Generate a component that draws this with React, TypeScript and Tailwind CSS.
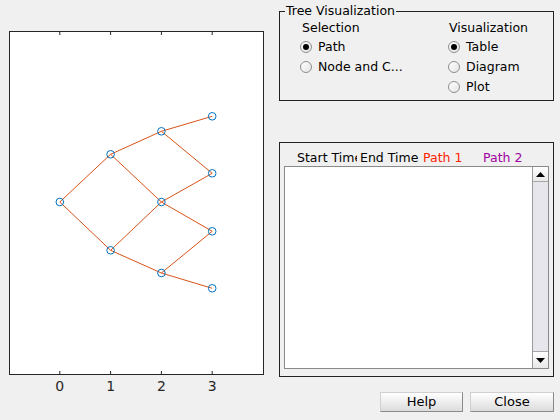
import React from "react";

const X = (d: number) => 9 + (d + 1) * 50.8;

const nodes: Record<string, [number, number]> = {
  a: [X(0), 202],
  b1: [X(1), 154.3],
  b2: [X(1), 250.3],
  c1: [X(2), 131.3],
  c2: [X(2), 202],
  c3: [X(2), 273],
  d1: [X(3), 116.3],
  d2: [X(3), 173.3],
  d3: [X(3), 231.3],
  d4: [X(3), 288.3],
};

const edges: [string, string][] = [
  ["a", "b1"],
  ["a", "b2"],
  ["b1", "c1"],
  ["b1", "c2"],
  ["b2", "c2"],
  ["b2", "c3"],
  ["c1", "d1"],
  ["c1", "d2"],
  ["c2", "d2"],
  ["c2", "d3"],
  ["c3", "d3"],
  ["c3", "d4"],
];

function Plot() {
  return (
    <svg width={275} height={420} className="block">
      <rect x={9.5} y={31.5} width={254} height={343} fill="#ffffff" stroke="#262626" strokeWidth={1} />
      {[0, 1, 2, 3].map((d) => (
        <g key={d}>
          <line x1={X(d)} x2={X(d)} y1={32} y2={35} stroke="#262626" strokeWidth={1} />
          <line x1={X(d)} x2={X(d)} y1={374} y2={371} stroke="#262626" strokeWidth={1} />
          <text
            x={X(d)}
            y={391}
            textAnchor="middle"
            fontSize={14}
            fill="#262626"
            fontFamily="'DejaVu Sans', sans-serif"
          >
            {d}
          </text>
        </g>
      ))}
      {edges.map(([p, q], i) => (
        <line
          key={i}
          x1={nodes[p][0]}
          y1={nodes[p][1]}
          x2={nodes[q][0]}
          y2={nodes[q][1]}
          stroke="#D95319"
          strokeWidth={1}
        />
      ))}
      {Object.entries(nodes).map(([k, [x, y]]) => (
        <circle key={k} cx={x} cy={y} r={3.8} fill="none" stroke="#0072BD" strokeWidth={1} />
      ))}
    </svg>
  );
}

function Radio({ checked, label }: { checked?: boolean; label: string }) {
  return (
    <div className="flex h-[20px] items-center">
      <div className="flex h-[12px] w-[12px] items-center justify-center rounded-full border border-[#8e8e8e] bg-gradient-to-br from-[#ffffff] to-[#e4e4e4]">
        {checked && <div className="h-[6px] w-[6px] rounded-full bg-[#000000]" />}
      </div>
      <span className="ml-[6px]">{label}</span>
    </div>
  );
}

function Btn({ label, w }: { label: string; w: string }) {
  return (
    <div
      className={`${w} flex h-[20px] items-center justify-center border border-t-[#d0d0d0] border-l-[#d0d0d0] border-r-[#8a8a8a] border-b-[#8a8a8a] bg-gradient-to-b from-[#ffffff] to-[#dcdcdc] text-[13px] text-black`}
    >
      {label}
    </div>
  );
}

export default function App() {
  return (
    <div
      className="flex h-[420px] w-[560px] bg-[#f0f0f0] text-[12.5px] leading-[18px] text-black"
      style={{ fontFamily: "'DejaVu Sans', sans-serif" }}
    >
      <div className="w-[275px] shrink-0">
        <Plot />
      </div>
      <div className="flex w-[285px] flex-col pl-[4px] pt-[11px]">
        <div className="relative h-[90px] w-[275px] border border-[#222222]">
          <span className="absolute left-[5px] top-[-10px] bg-[#f0f0f0] px-[1px]">Tree Visualization</span>
          <div className="flex pt-[7px]">
            <div className="w-[168px] pl-[20px]">
              <div className="ml-[2px] h-[18px]">Selection</div>
              <Radio checked label="Path" />
              <Radio label="Node and C..." />
            </div>
            <div className="flex-1">
              <div className="ml-[1px] h-[18px]">Visualization</div>
              <Radio checked label="Table" />
              <Radio label="Diagram" />
              <Radio label="Plot" />
            </div>
          </div>
        </div>
        <div className="mt-[41px] flex h-[235px] w-[275px] flex-col border border-[#222222] pt-[6px]">
          <div className="flex h-[17px] items-center whitespace-nowrap pl-[17px] leading-[17px]">
            <div className="mr-[3px] w-[60px] overflow-hidden">Start Time</div>
            <div className="w-[63px] overflow-hidden">End Time</div>
            <div className="w-[60px] text-[#ff2200]">Path 1</div>
            <div className="text-[#a000a0]">Path 2</div>
          </div>
          <div className="ml-[4px] flex h-[203px] w-[265px] border border-[#8a8a8a] bg-white">
            <div className="flex-1" />
            <div className="flex w-[16px] flex-col border-l border-[#9a9a9a] bg-[#e6e6ec]">
              <div className="flex h-[15px] items-center justify-center border-b border-[#a8a8a8] bg-gradient-to-b from-[#ffffff] to-[#e8e8e8]">
                <svg width="9" height="5" viewBox="0 0 9 5">
                  <polygon points="0,5 9,5 4.5,0" fill="#000" />
                </svg>
              </div>
              <div className="flex-1" />
              <div className="flex h-[17px] items-center justify-center border-t border-[#a8a8a8] bg-gradient-to-b from-[#ffffff] to-[#e8e8e8]">
                <svg width="9" height="5" viewBox="0 0 9 5">
                  <polygon points="0,0 9,0 4.5,5" fill="#000" />
                </svg>
              </div>
            </div>
          </div>
        </div>
        <div className="mt-[15px] flex w-[275px] justify-end gap-[7px]">
          <Btn label="Help" w="w-[83px]" />
          <Btn label="Close" w="w-[84px]" />
        </div>
      </div>
    </div>
  );
}
